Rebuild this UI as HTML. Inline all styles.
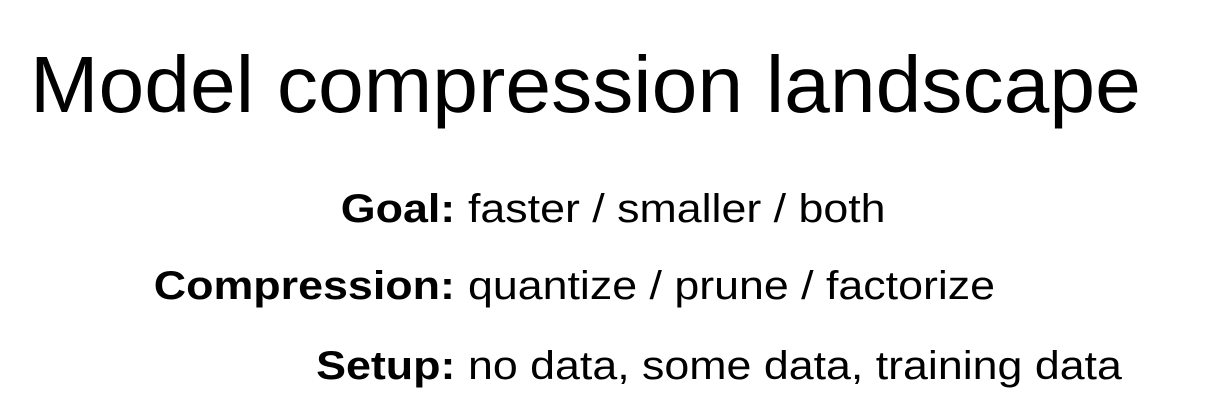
<!DOCTYPE html>
<html><head><meta charset="utf-8"><style>
html,body{margin:0;padding:0;background:#fff;width:1211px;height:414px;overflow:hidden;position:relative;font-family:"Liberation Sans",sans-serif;color:#000}
.t{position:absolute;left:30px;top:45px;font-size:80px;line-height:80px;white-space:nowrap;transform:scaleX(1.028);transform-origin:0 0}
.l{position:absolute;right:756px;font-size:40px;line-height:40px;font-weight:bold;white-space:nowrap;transform:scaleX(1.12);transform-origin:100% 0}
.v{position:absolute;left:468px;font-size:40px;line-height:40px;white-space:nowrap;transform:scaleX(1.118);transform-origin:0 0}
</style></head><body>
<div class="t">Model compression landscape</div>
<div class="l" style="top:189px">Goal:</div><div class="v" style="top:189px">faster / smaller / both</div>
<div class="l" style="top:266px">Compression:</div><div class="v" style="top:266px">quantize / prune / factorize</div>
<div class="l" style="top:346px">Setup:</div><div class="v" style="top:346px">no data, some data, training data</div>
</body></html>
